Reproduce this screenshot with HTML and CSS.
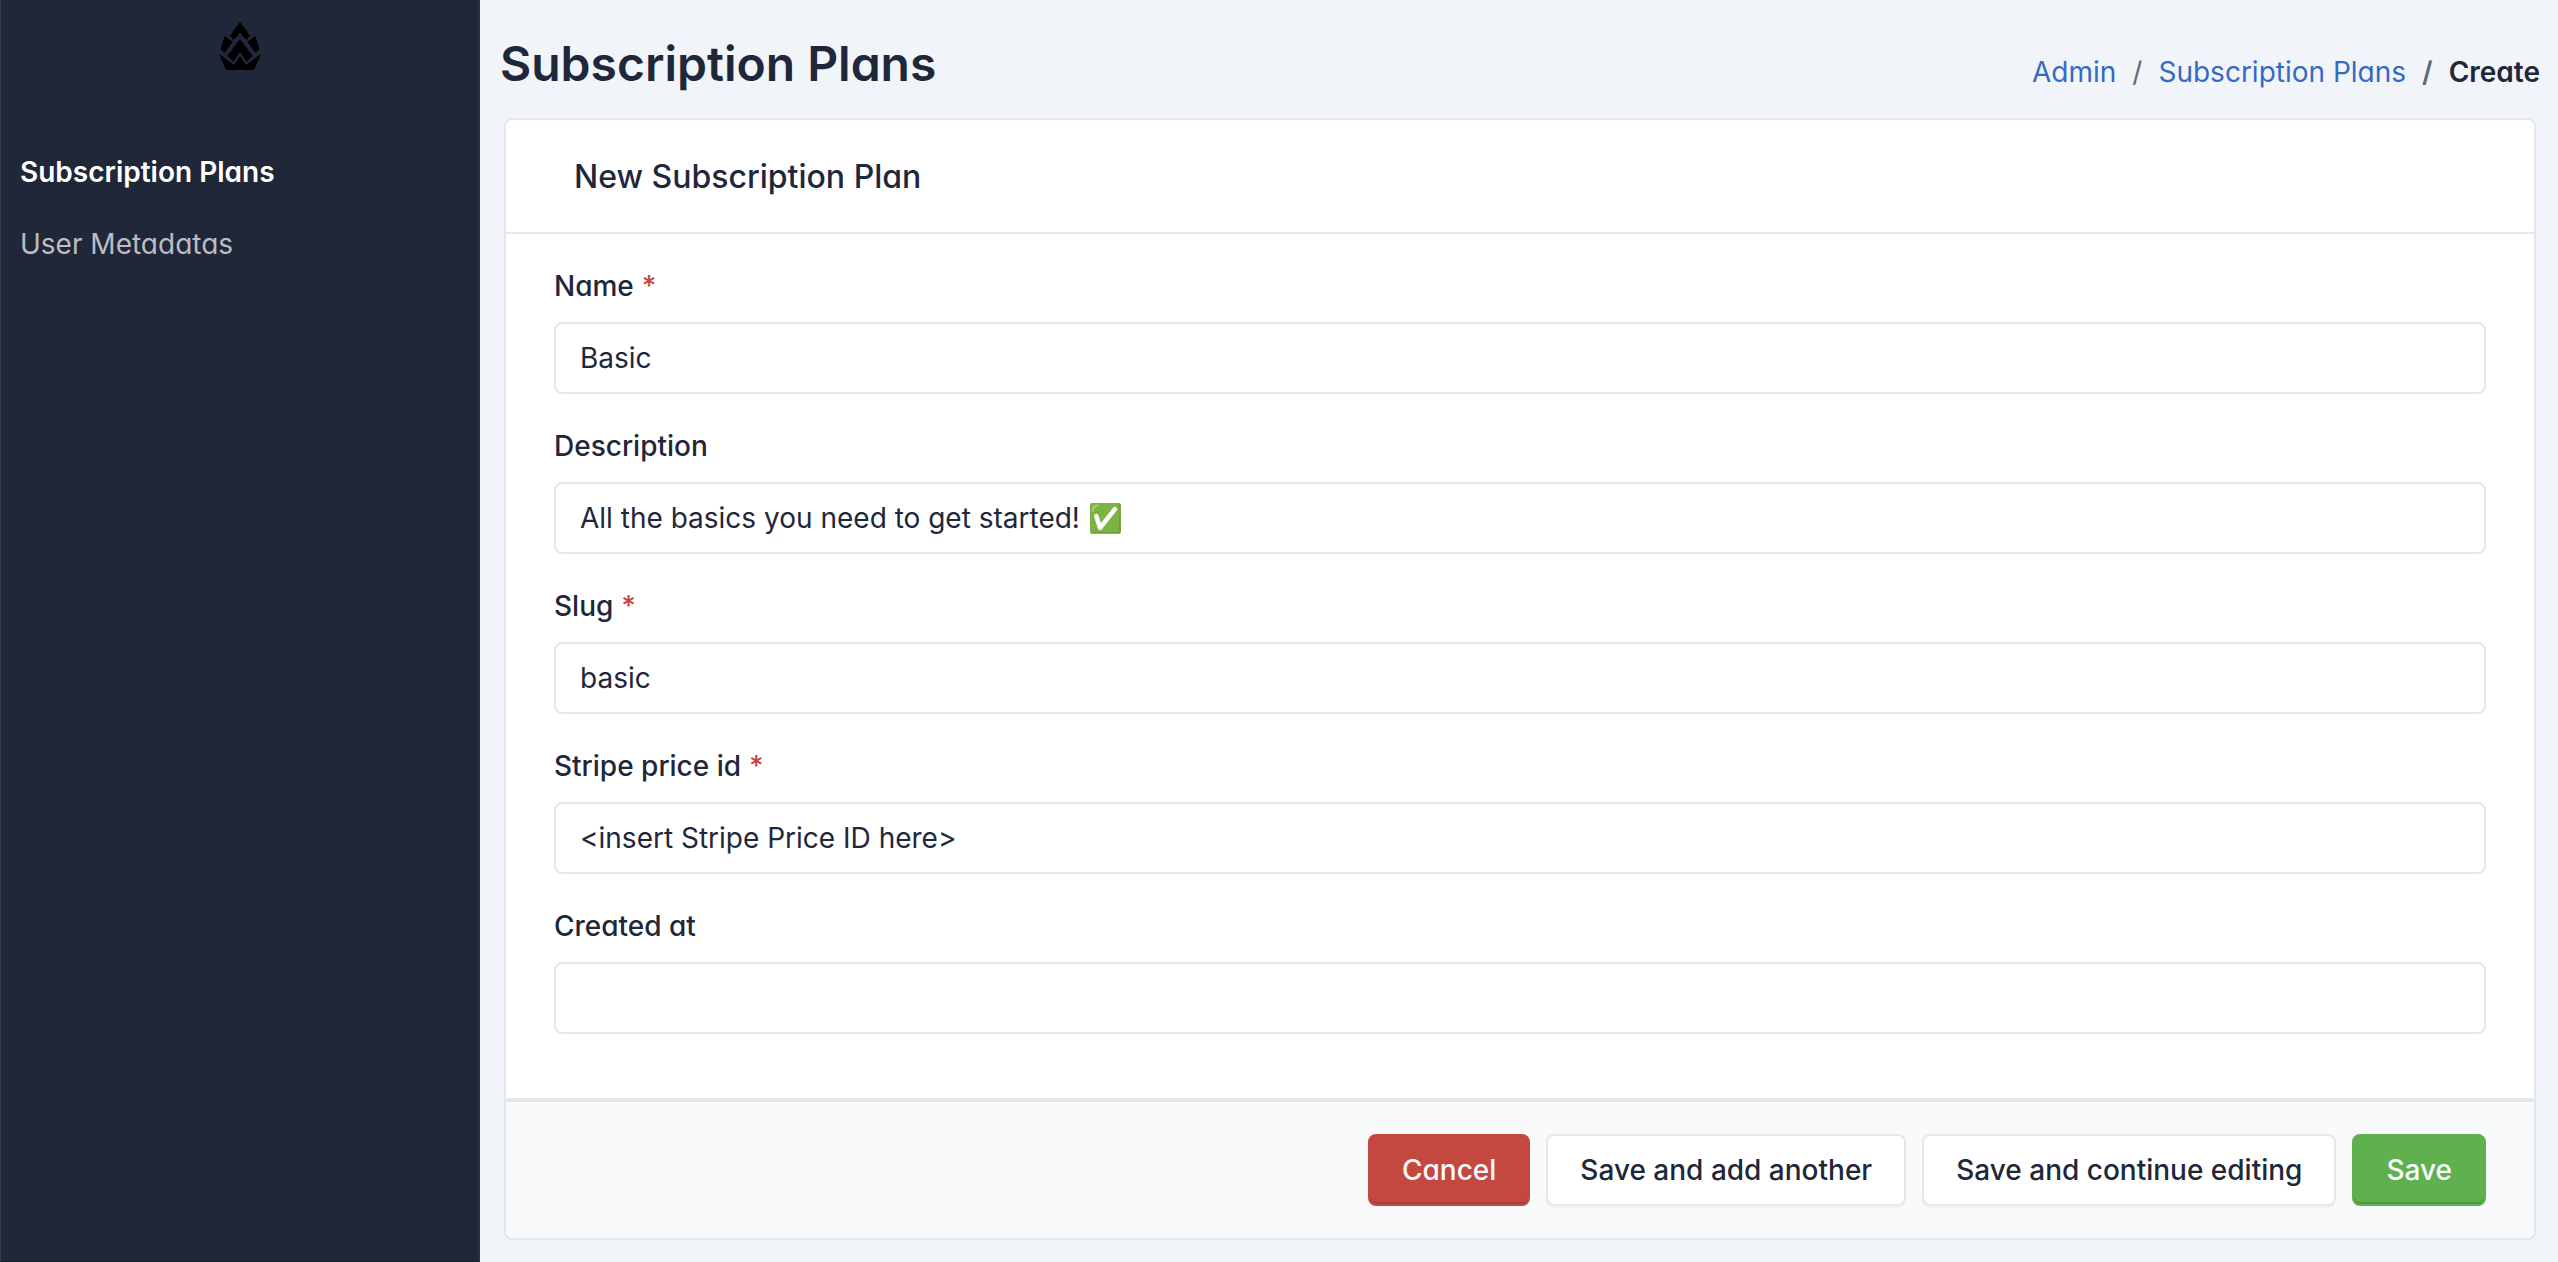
FILE: index.html
```
<!DOCTYPE html>
<html lang="en">
<head>
    <meta charset="utf-8">
    <title>Subscription Plans</title>
    <link rel="stylesheet" href="styles.css">
</head>
<body>
    <div class="wrapper">
        <aside class="navbar">
            <a class="navbar-brand" href="#" aria-label="Admin">
                <svg class="logo" viewBox="0 0 144 168">
                    <path d="M72 12 L102 53 L91 66 L72 44 L53 66 L42 53 Z"/>
                    <path d="M72 63 L110 113 L92 131 L72 102 L52 131 L34 113 Z"/>
                    <path d="M26 53 L50 72 L26 104 L14 94 Z"/>
                    <path d="M118 53 L94 72 L118 104 L130 94 Z"/>
                    <path d="M9 107 L54 141 L72 115 L90 141 L135 107 L116 152 L110 156 H34 L28 152 Z"/>
                </svg>
            </a>
            <ul class="navbar-nav">
                <li><a class="nav-link active" href="#">Subscription Plans</a></li>
                <li><a class="nav-link" href="#">User Metadatas</a></li>
            </ul>
        </aside>

        <main class="content">
            <header class="page-header">
                <h1 class="page-title">Subscription Plans</h1>
                <ol class="breadcrumb">
                    <li><a href="#">Admin</a></li>
                    <li><a href="#">Subscription Plans</a></li>
                    <li class="active">Create</li>
                </ol>
            </header>

            <form class="card">
                <div class="card-header">
                    <h3 class="card-title">New Subscription Plan</h3>
                </div>
                <div class="card-body">
                    <div class="form-group">
                        <label class="required" for="name">Name</label>
                        <input type="text" id="name" name="name" value="Basic">
                    </div>
                    <div class="form-group">
                        <label for="description">Description</label>
                        <input type="text" id="description" name="description" value="All the basics you need to get started! ✅">
                    </div>
                    <div class="form-group">
                        <label class="required" for="slug">Slug</label>
                        <input type="text" id="slug" name="slug" value="basic">
                    </div>
                    <div class="form-group">
                        <label class="required" for="stripe_price_id">Stripe price id</label>
                        <input type="text" id="stripe_price_id" name="stripe_price_id" value="&lt;insert Stripe Price ID here&gt;">
                    </div>
                    <div class="form-group">
                        <label for="created_at">Created at</label>
                        <input type="text" id="created_at" name="created_at">
                    </div>
                </div>
                <div class="card-footer">
                    <a class="btn btn-danger" href="#">Cancel</a>
                    <button class="btn" type="submit" name="save">Save and add another</button>
                    <button class="btn" type="submit" name="save">Save and continue editing</button>
                    <button class="btn btn-success" type="submit" name="save">Save</button>
                </div>
            </form>
        </main>
    </div>
</body>
</html>
```
FILE: styles.css
```
* {
    box-sizing: border-box;
}

body {
    margin: 0;
    background: #f1f5fa;
    color: #1f273b;
    font-family: Inter, sans-serif;
    font-feature-settings: "cv03", "cv04", "cv11";
    font-size: 28px;
    line-height: 40px;
}

a {
    color: #356ac3;
    text-decoration: none;
}

.wrapper {
    display: flex;
    min-height: 100vh;
}

/* Sidebar */
.navbar {
    width: 480px;
    flex-shrink: 0;
    background: #1f2739;
    border-left: 1px solid #353c4d;
    border-right: 2px solid #282f42;
    border-bottom: 1px solid #1d1a2e;
}

.navbar-brand {
    display: flex;
    justify-content: center;
    padding: 18px 0;
}

.logo {
    width: 48px;
    height: 56px;
    fill: #000;
}

.navbar-nav {
    list-style: none;
    margin: 0;
    padding: 44px 0 0;
}

.nav-link {
    display: block;
    padding: 16px 19px;
    color: #bbbdc2;
}

.nav-link.active {
    color: #fff;
    font-weight: 600;
}

/* Page */
.content {
    flex: 1;
    padding: 0 18px 20px 20px;
}

.page-header {
    display: flex;
    justify-content: space-between;
    align-items: flex-end;
    padding-top: 32px;
}

.page-title {
    margin: 0;
    font-size: 48px;
    font-weight: 600;
    line-height: 64px;
}

.breadcrumb {
    display: flex;
    list-style: none;
    margin: 0;
    padding: 0 0 4px;
}

.breadcrumb li + li::before {
    content: "/";
    padding: 0 16px;
    color: #626976;
}

.breadcrumb .active {
    font-weight: 600;
}

.card {
    margin: 22px 4px 0;
    background: #fff;
    border: 2px solid #e6e7e9;
    border-radius: 8px;
}

.card-header {
    padding: 37px 68px 35px;
    border-bottom: 2px solid #e6e7e9;
}

.card-title {
    margin: 0;
    font-size: 32px;
    font-weight: 500;
    line-height: 40px;
}

.card-body {
    padding: 38px 48px 26px;
}

.form-group {
    margin-bottom: 38px;
}

.form-group label {
    display: block;
    margin-bottom: 22px;
    font-weight: 500;
    line-height: 28px;
}

.required::after {
    content: "*";
    margin-left: 8px;
    color: #c44740;
}

.form-group input {
    display: block;
    width: 100%;
    height: 72px;
    padding: 0 24px;
    border: 2px solid #e6e7e9;
    border-radius: 8px;
    background: #fff;
    color: inherit;
    font-family: inherit;
    font-size: 28px;
}

.card-footer {
    display: flex;
    justify-content: flex-end;
    gap: 16px;
    padding: 32px 48px;
    background: #f8fafc;
    border-top: 4px solid #e6e7e9;
    border-radius: 0 0 6px 6px;
}

.btn {
    padding: 14px 32px;
    background: #fff;
    border: 2px solid #e6e7e9;
    border-radius: 8px;
    box-shadow: 0 2px 0 rgba(30, 41, 59, 0.04);
    color: #1f273b;
    font-family: inherit;
    font-size: 28px;
    font-weight: 500;
    line-height: 40px;
    cursor: pointer;
}

.btn-danger {
    background: #c44740;
    border-color: #c44740;
    box-shadow: inset 0 -2px 0 rgba(30, 41, 59, 0.2);
    color: #f8fafc;
}

.btn-success {
    background: #5eb14e;
    border-color: #5eb14e;
    box-shadow: inset 0 -2px 0 rgba(30, 41, 59, 0.2);
    color: #f8fafc;
}
```
